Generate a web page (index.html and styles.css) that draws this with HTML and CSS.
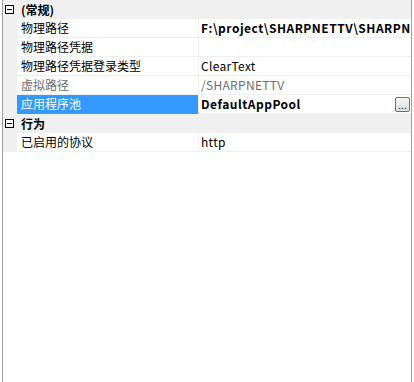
FILE: index.html
```html
<!DOCTYPE html>
<html lang="zh-CN">
<head>
  <meta charset="UTF-8">
  <title>属性</title>
  <link rel="stylesheet" href="styles.css">
</head>
<body>

  <div class="grid">
    <!-- 常规 -->
    <div class="category">
      <span class="toggle"></span>
      <span class="cat-name">(常规)</span>
    </div>
    <div class="row">
      <div class="gutter"></div>
      <div class="name">物理路径</div>
      <div class="value bold">F:\project\SHARPNETTV\SHARPNETTV</div>
    </div>
    <div class="row">
      <div class="gutter"></div>
      <div class="name">物理路径凭据</div>
      <div class="value"></div>
    </div>
    <div class="row">
      <div class="gutter"></div>
      <div class="name">物理路径凭据登录类型</div>
      <div class="value">ClearText</div>
    </div>
    <div class="row disabled">
      <div class="gutter"></div>
      <div class="name">虚拟路径</div>
      <div class="value">/SHARPNETTV</div>
    </div>
    <div class="row selected">
      <div class="gutter"></div>
      <div class="name">应用程序池</div>
      <div class="value bold">DefaultAppPool<button class="dots">...</button></div>
    </div>

    <!-- 行为 -->
    <div class="category">
      <span class="toggle"></span>
      <span class="cat-name">行为</span>
    </div>
    <div class="row">
      <div class="gutter"></div>
      <div class="name">已启用的协议</div>
      <div class="value">http</div>
    </div>
  </div>

</body>
</html>
```

FILE: styles.css
```css
body {
  margin: 0;
  background: #fff;
  font-family: "Noto Sans CJK SC", "Noto Sans", sans-serif;
  font-size: 12px;
  color: #000;
}

.grid {
  margin-left: 2px;
  width: 408px;
  height: 382px;
  border-left: 1px solid #a0a0a0;
  border-right: 1px solid #a0a0a0;
  background: #fff;
}

.category {
  display: flex;
  align-items: center;
  height: 19px;
  background: #f0f0f0;
}

.toggle {
  position: relative;
  box-sizing: border-box;
  width: 9px;
  height: 9px;
  margin-left: 2px;
  border: 1px solid #000;
  background: #fff;
}

/* minus sign */
.toggle::after {
  content: "";
  position: absolute;
  left: 1px;
  top: 3px;
  width: 5px;
  height: 1px;
  background: #000;
}

.cat-name {
  margin-left: 7px;
  font-weight: bold;
  line-height: 19px;
}

.row {
  display: flex;
  height: 19px;
  line-height: 18px;
}

.gutter {
  width: 14px;
  flex-shrink: 0;
  background: #f0f0f0;
}

.name {
  width: 177px;
  flex-shrink: 0;
  padding-left: 4px;
  border-bottom: 1px solid #f0f0f0;
  border-right: 1px solid #f0f0f0;
  white-space: nowrap;
  overflow: hidden;
}

.value {
  flex-grow: 1;
  display: flex;
  align-items: center;
  padding-left: 2px;
  border-bottom: 1px solid #f0f0f0;
  white-space: nowrap;
  overflow: hidden;
  min-width: 0;
  letter-spacing: 0.3px;
}

.bold {
  font-weight: bold;
  letter-spacing: 0.5px;
}

.disabled .name,
.disabled .value {
  color: #6d6d6d;
}

.selected .name {
  background: #3399ff;
  color: #fff;
  border-bottom-color: #3399ff;
}

.dots {
  margin-left: auto;
  margin-right: 1px;
  width: 15px;
  height: 15px;
  padding: 0;
  border: 1px solid #707070;
  border-radius: 2px;
  background: linear-gradient(#f6f6f6, #dddddd);
  font-family: "Liberation Sans", sans-serif;
  font-size: 10px;
  font-weight: normal;
  line-height: 16px;
  letter-spacing: 0;
  color: #000;
}
```
